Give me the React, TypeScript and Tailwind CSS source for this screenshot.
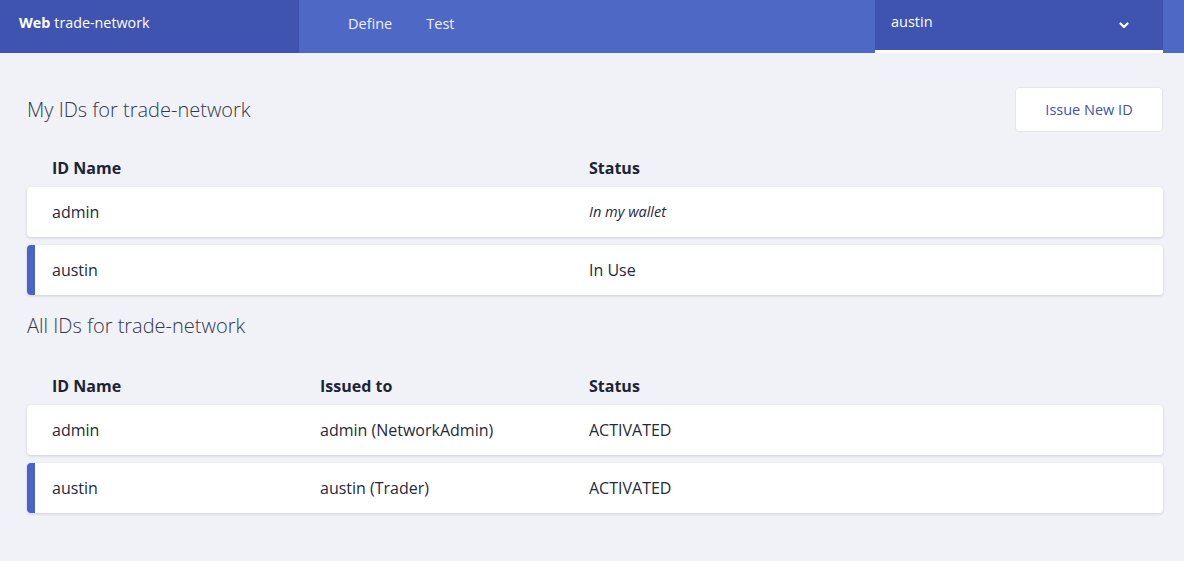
import React from 'react';

const font = { fontFamily: '"Open Sans", "Liberation Sans", sans-serif' };

type Row = { name: string; issued?: string; status: string; italic?: boolean; active?: boolean };

const myIds: Row[] = [
  { name: 'admin', status: 'In my wallet', italic: true },
  { name: 'austin', status: 'In Use', active: true },
];

const allIds: Row[] = [
  { name: 'admin', issued: 'admin (NetworkAdmin)', status: 'ACTIVATED' },
  { name: 'austin', issued: 'austin (Trader)', status: 'ACTIVATED', active: true },
];

const Table: React.FC<{ rows: Row[]; showIssued: boolean }> = ({ rows, showIssued }) => (
  <div>
    <div className="grid grid-cols-[268px_269px_1fr] pl-[25px] h-[38px] items-center text-[16px] font-bold text-[#1c2435]">
      <span>ID Name</span>
      <span>{showIssued ? 'Issued to' : ''}</span>
      <span>Status</span>
    </div>
    <div className="flex flex-col gap-2">
      {rows.map((r) => (
        <div
          key={r.name}
          className="relative h-[50px] bg-white rounded-[4px] shadow-[0_1px_3px_rgba(40,50,80,0.18)] grid grid-cols-[268px_269px_1fr] pl-[25px] items-center text-[16px] text-[#1f2a3c] overflow-hidden"
        >
          {r.active && <div className="absolute left-0 top-0 bottom-0 w-2 bg-[#4a63c9]" />}
          <span>{r.name}</span>
          <span>{r.issued ?? ''}</span>
          <span className={r.italic ? 'italic text-[14.5px]' : ''}>{r.status}</span>
        </div>
      ))}
    </div>
  </div>
);

export default function App() {
  return (
    <div className="w-[1184px] h-[561px] bg-[#f1f2f7] overflow-hidden" style={font}>
      <header className="flex h-[53px] bg-[#4e68c5] text-white">
        <div className="w-[299px] bg-[#3f53b0] flex items-center pl-[19px] pb-[8px] text-[14.3px]">
          <span className="font-bold mr-1">Web</span>
          <span>trade-network</span>
        </div>
        <nav className="flex-1 flex items-center pl-[49px] gap-[34px] pb-[6px] text-[14.5px] text-[#eef0fb]">
          <span>Define</span>
          <span>Test</span>
        </nav>
        <div className="w-[288px] bg-[#3f53b0] border-b-[3px] border-white flex items-center justify-between pl-4 pr-[33px] pb-[6px] text-[14.5px]">
          <span>austin</span>
          <svg width="12" height="12" viewBox="0 0 12 12" className="mt-[6px]">
            <path d="M2.5 4.5 L6 8 L9.5 4.5" fill="none" stroke="white" strokeWidth="2.2" strokeLinecap="round" strokeLinejoin="round" />
          </svg>
        </div>
        <div className="w-[21px]" />
      </header>

      <main className="pl-[27px] pr-[21px]">
        <div className="flex items-center justify-between mt-[34px] h-[45px]">
          <h2 className="text-[20px] font-light text-[#323a4c]">My IDs for trade-network</h2>
          <button className="w-[148px] h-[45px] bg-white rounded-[4px] border border-[#e4e6ee] text-[14.5px] text-[#3f51b5]">
            Issue New ID
          </button>
        </div>
        <div className="mt-[17px]">
          <Table rows={myIds} showIssued={false} />
        </div>

        <h2 className="text-[20px] font-light text-[#323a4c] mt-[15px] h-[32px] leading-[32px]">All IDs for trade-network</h2>
        <div className="mt-[25px]">
          <Table rows={allIds} showIssued={true} />
        </div>
      </main>
    </div>
  );
}
